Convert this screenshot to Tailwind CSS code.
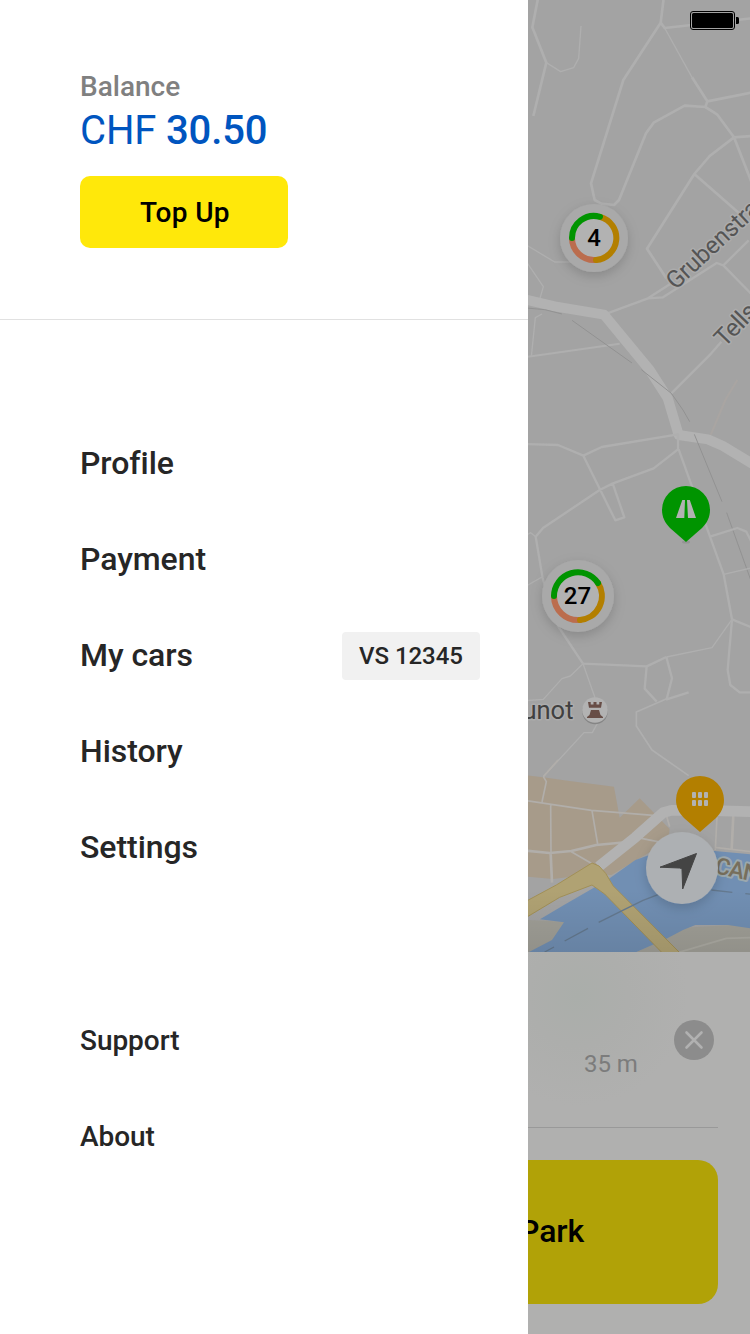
<!DOCTYPE html>
<html lang="en">
<head>
<meta charset="utf-8">
<title>Parking menu</title>
<script src="https://cdn.jsdelivr.net/npm/@tailwindcss/browser@4"></script>
</head>
<body class="w-[750px] h-[1334px] overflow-hidden flex bg-[#b0b0b0] font-['Roboto',sans-serif] font-medium text-[#262626] [font-variant-ligatures:none]">

<aside class="w-[528px] h-[1334px] shrink-0 bg-white flex flex-col">
  <section class="h-[320px] border-b border-[#e1e1e1] pl-20 pt-[71px] flex flex-col items-start">
    <div class="text-[28px] leading-[32px] text-[#808080]">Balance</div>
    <div class="text-[40px] leading-[48px] mt-1 text-[#0055bf] tracking-[-0.15px]"><span class="font-normal">CHF</span> 30.50</div>
    <button class="mt-[21px] w-[208px] h-[72px] pt-0.5 pl-0.5 rounded-[10px] bg-[#ffe80a] text-black text-[28px] tracking-[0.35px]">Top Up</button>
  </section>
  <nav class="mt-[95px] pl-20 pr-12 text-[32px] tracking-[-0.05px]">
    <a class="h-24 flex items-center">Profile</a>
    <a class="h-24 flex items-center">Payment</a>
    <a class="h-24 flex items-center justify-between">My cars <span class="mt-0.5 w-[138px] h-12 rounded-[4px] bg-[#f1f1f1] flex items-center justify-center text-[24px]">VS 12345</span></a>
    <a class="h-24 flex items-center">History</a>
    <a class="h-24 flex items-center">Settings</a>
  </nav>
  <nav class="mt-[98px] pl-20 text-[28px] tracking-[-0.05px]">
    <a class="h-24 flex items-center">Support</a>
    <a class="h-24 flex items-center">About</a>
  </nav>
</aside>

<main class="w-[222px] h-[1334px] overflow-hidden flex flex-col">
  <svg class="block shrink-0" width="222" height="952" viewBox="0 0 222 952" fill="none" font-family="Roboto, sans-serif">
    <defs>
      <filter id="shadow" x="-50%" y="-50%" width="200%" height="200%"><feDropShadow dx="0" dy="4" stdDeviation="6" flood-color="#000" flood-opacity=".17"/></filter>
      <linearGradient id="fade" x1="0" y1="0" x2="0" y2="1"><stop offset="0" stop-color="#000" stop-opacity="0"/><stop offset="1" stop-color="#000" stop-opacity=".09"/></linearGradient>
    </defs>
    <rect width="222" height="952" fill="#a3a3a3"/>

    <!-- northern streets -->
    <g transform="scale(.33333)" stroke="#afafaf" stroke-width="8" stroke-linejoin="round">
      <path d="M30 -5L13 82L55 188L16 348"/>
      <path stroke-width="4" d="M55 188L98 215L137 203L152 175L159 78"/>
      <path d="M407 -5L398 68L286 240L189 550L200 600L220 611L258 615L273 600L354 400L377 368L470 317L532 321L567 343L618 412L670 408M398 68L410 84L670 55"/>
      <path stroke-width="4" d="M410 84L492 232"/>
      <path stroke-width="8" d="M492 232L538 304L670 278M538 304L532 321M618 412L545 468L499 522L357 746L415 835M618 412L670 545M499 522L670 672"/>
    </g>
    <g transform="translate(0 200) scale(.33333)" stroke="#afafaf" stroke-width="7" stroke-linejoin="round">
      <path stroke-width="4" d="M-5 135L80 186H150M-5 185L46 260L36 295M42 342L22 353L10 470"/>
      <path stroke-width="6" d="M-5 471L275 431"/>
      <path d="M230 343L360 295L405 292L566 189L586 196L670 282M360 295L430 250M586 196L662 121M580 425L550 460L430 580"/>
      <path stroke="#a9a5a2" stroke-width="6" d="M628 540L592 600L548 705"/>
      <path stroke="#b2b2b2" stroke-width="30" d="M-10 298L80 319L228 344L365 510L419 594L452 705L540 718L585 738L680 796"/>
      <path stroke="#929292" stroke-width="3" d="M-5 324L50 329L102 342M132 361L312 489M340 509L430 580L465 630L485 665M499 703L582 905M596 938L670 1145"/>
    </g>

    <!-- central streets -->
    <g transform="translate(0 430) scale(.33333)" stroke="#afafaf" stroke-width="7" stroke-linejoin="round">
      <path d="M-5 42L90 45L166 77L221 51L450 13V58L377 115L253 161L215 180L45 294L23 320L44 445L88 585L165 701L356 709L415 681M166 77L262 271L289 262L255 163M452 58L546 320L587 433L612 568L670 592M546 320L628 294L655 305L675 345M612 568L599 720L607 765L635 787H670"/>
      <path stroke-width="4" d="M23 320L8 308L-5 316M42 441L-5 468M587 433L670 414M612 568L552 653L415 681M165 701L200 800L208 880L193 908H168L46 1040M165 701L127 738L102 746L46 808L-5 812"/>
      <path d="M356 709L350 776L386 815M415 681L432 745L416 808L482 787"/>
      <path stroke-width="5" d="M416 806L325 846V888L372 960L482 1037"/>
    </g>

    <!-- old town and river -->
    <g transform="translate(0 760) scale(.33333)" stroke-linejoin="round">
      <path fill="#a79b8a" d="M-5 46L45 52L130 64L258 80L275 173L335 115L425 207L420 245L360 280L250 345L150 340L130 350L75 357L-5 350Z"/>
      <path fill="#a09f97" d="M-5 480L110 485L75 540L0 580H-5ZM320 580L410 535L470 503L670 492V580Z"/>
      <path fill="#718fb3" d="M36 478L108 435L195 385L245 355L322 300L358 287L560 273L670 283V505L600 495H502L465 510L415 536L325 576H3L72 540L108 487Z"/>
      <g stroke="#b1aeaa" stroke-width="5">
        <path d="M46 50L55 65L42 126M-5 122L190 151L385 167M68 132L69 280M192 152L209 252M90 0L46 50M130 275L195 313M340 235L400 247M415 165L425 200M567 170L562 270M560 262L670 275"/>
        <path stroke-width="8" d="M-5 272L65 279L130 273L205 255L300 246M68 280L72 368M616 165L611 268"/>
        <path stroke="#acaba3" stroke-width="5" d="M450 578L595 535L670 533"/>
      </g>
      <path stroke="#b2b2b2" stroke-width="32" d="M212 320L322 232L405 158L430 151H530L675 155"/>
      <path stroke="#a29056" fill="#b0a273" stroke-width="3" d="M-8 425L85 375L192 309L213 318L233 340L255 377L455 578H402L230 402L192 375L95 412L-8 474Z"/>
      <path stroke="#64798f" stroke-width="4" d="M50 576L78 561M110 543L180 505M212 487L278 454L345 421L390 404M550 390L613 397M652 401L670 403"/>
      <rect x="0" y="390" width="666" height="186" fill="url(#fade)"/>
    </g>

    <!-- map labels -->
    <g font-size="24.500" font-weight="400" fill="#555" stroke="#acacac" stroke-width="3" paint-order="stroke" stroke-linejoin="round">
      <text transform="translate(147.500 290.500) rotate(-43)" textLength="117" lengthAdjust="spacingAndGlyphs">Grubenstra</text>
      <text transform="translate(196.500 348) rotate(-46)" letter-spacing="-.5">Tells</text>
      <text x="45.500" y="718.500" text-anchor="end" fill="#404040" font-size="25.500">Munot</text>
      <text transform="translate(186 873) rotate(12)" fill="#776f5c" stroke="#9ba8ae" stroke-width="4" font-weight="500" font-size="23" letter-spacing="-1">CAN</text>
    </g>

    <!-- castle -->
    <circle cx="67" cy="711.500" r="12.800" fill="#858585"/>
    <circle cx="67" cy="710" r="12.800" fill="#b2b2b2"/>
    <path fill="#674d46" d="M60 702H62.700V704.500H65.500V702H68.500V704.500H71.300V702H74L73 707.700H61ZM63 710H71L72.500 715L75 717V718H59V717L61.500 715Z"/>

    <!-- cluster of 4 -->
    <g filter="url(#shadow)"><circle cx="66" cy="238" r="34" fill="#a9a9a9"/></g>
    <circle cx="66" cy="238" r="22" fill="#b2b2b2"/>
    <g stroke-width="6" stroke-linecap="round">
      <path stroke="#bb6d4e" d="M44 238A22 22 0 0 0 68 260"/>
      <path stroke="#b37f00" d="M72 216.800A22 22 0 0 1 68 260"/>
      <path stroke="#009400" d="M44 238A22 22 0 0 1 72 216.800"/>
    </g>
    <text x="66" y="246" text-anchor="middle" font-size="24" font-weight="500" fill="#000">4</text>

    <!-- cluster of 27 -->
    <g filter="url(#shadow)"><circle cx="50" cy="596" r="36" fill="#a9a9a9"/></g>
    <circle cx="50" cy="596" r="24" fill="#b2b2b2"/>
    <g stroke-width="6" stroke-linecap="round">
      <path stroke="#bb6d4e" d="M26 596A24 24 0 0 0 52 620"/>
      <path stroke="#b37f00" d="M70 583A24 24 0 0 1 52 620"/>
      <path stroke="#009400" d="M26 596A24 24 0 0 1 70 583"/>
    </g>
    <text x="49.500" y="604" text-anchor="middle" font-size="24" font-weight="500" fill="#000">27</text>

    <!-- street parking pin -->
    <ellipse cx="158" cy="542" rx="4" ry="1.500" fill="#949494"/>
    <path fill="#009400" d="M158 542L142 528C137 523 134 517 134 510A24 24 0 0 1 182 510C182 517 179 523 174 528Z"/>
    <path fill="#b2b2b2" d="M154.300 500H157L156.300 518H148ZM159 500H161.800L168 518H160Z"/>

    <!-- locate button -->
    <g filter="url(#shadow)"><circle cx="154" cy="868" r="36" fill="#adb0b3"/></g>
    <path fill="#444" stroke="#444" stroke-linejoin="round" d="M168.500 853.500L154.700 889L154 869.500Q153.500 868 151.500 868L132 867.200Z"/>

    <!-- garage pin -->
    <path fill="#b37f00" d="M172 832L156 818C151 813 148 807 148 800A24 24 0 0 1 196 800C196 807 193 813 188 818Z"/>
    <g fill="#b2b2b2">
      <rect x="164" y="792" width="4" height="6" rx="1"/><rect x="170" y="792" width="4" height="6" rx="1"/><rect x="176" y="792" width="4" height="6" rx="1"/>
      <rect x="164" y="800" width="4" height="6" rx="1"/><rect x="170" y="800" width="4" height="6" rx="1"/><rect x="176" y="800" width="4" height="6" rx="1"/>
    </g>

    <!-- battery -->
    <rect x="162.500" y="11.500" width="44" height="18" rx="2.500" stroke="#000"/>
    <rect x="164" y="13" width="41" height="15" rx="1.500" fill="#000"/>
    <path fill="#000" d="M208 17H209.500Q211 17 211 18.500V22.500Q211 24 209.500 24H208Z"/>
  </svg>

  <section class="h-[382px] flex flex-col bg-[radial-gradient(circle_at_50px_44px,#aaaeaa_0px,#adaeac_50px,#b0b0af_110px)]">
    <div class="h-[176px] w-[190px] border-b border-[#999] flex items-start">
      <div class="ml-14 mt-24 w-[90px] text-[24px] leading-8 font-normal text-[#7c7c7c] tracking-[-0.1px]">35 m</div>
      <svg class="mt-[68px] shrink-0" width="40" height="40" viewBox="0 0 40 40" fill="none"><circle cx="20" cy="20" r="20" fill="#8c8c8c"/><path stroke="#b1b1b1" stroke-width="2.600" stroke-linecap="round" d="M12.500 12.500L27.500 27.500M27.500 12.500L12.500 27.500"/></svg>
    </div>
    <div class="mt-8 w-[190px] h-36 pb-0.5 rounded-r-[20px] bg-[#b1a207] flex items-center overflow-hidden text-[32px] text-black tracking-[-0.1px]"><span class="-ml-[9px]">Park</span></div>
  </section>
</main>
</body>
</html>
